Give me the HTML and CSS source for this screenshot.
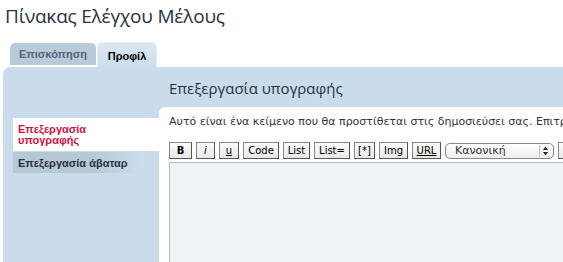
FILE: index.html
```html
<!DOCTYPE html>
<html lang="el">

<head>
  <meta charset="UTF-8" />
  <title>Πίνακας Ελέγχου Μέλους</title>
  <link rel="stylesheet" href="styles.css">
</head>

<body>
  <div class="page">
    <h2 class="title">Πίνακας Ελέγχου Μέλους</h2>

    <div class="tabs">
      <a class="tab">Επισκόπηση</a>
      <a class="tab active">Προφίλ</a>
    </div>

    <div class="panel">
      <div class="menu">
        <a class="menu-item active"><span>Επεξεργασία υπογραφής</span></a>
        <a class="menu-item">Επεξεργασία άβαταρ</a>
      </div>

      <div class="content">
        <h3 class="heading">Επεξεργασία υπογραφής</h3>
        <div class="box">
          <p class="intro">Αυτό είναι ένα κείμενο που θα προστίθεται στις δημοσιεύσει σας. Επιτρέπεται η χρήση BBCode.</p>

          <div class="toolbar">
            <button class="btn b">B</button>
            <button class="btn i">i</button>
            <button class="btn u">u</button>
            <button class="btn w-code">Code</button>
            <button class="btn w-list">List</button>
            <button class="btn w-code">List=</button>
            <button class="btn w-star">[*]</button>
            <button class="btn w-img">Img</button>
            <button class="btn w-img url">URL</button>
            <div class="select">
              <span>Κανονική</span>
              <svg class="arrows" width="10" height="12" viewBox="0 0 10 12">
                <line x1="0.5" y1="0" x2="0.5" y2="12" stroke="#bbb" />
                <path d="M4 5 L6.5 1.5 L9 5 Z" fill="#222" />
                <path d="M4 7 L6.5 10.5 L9 7 Z" fill="#222" />
              </svg>
            </div>
            <button class="btn colour">Χρώμα</button>
          </div>

          <div class="editor"></div>
        </div>
      </div>
    </div>
  </div>
</body>

</html>
```

FILE: styles.css
```css
body {
  margin: 0;
  background-color: white;
  font-family: "DejaVu Sans", Verdana, sans-serif;
  color: #28313f;
  overflow: hidden;
}

.page {
  padding: 3px 0 0 3px;
  width: 760px;
}

.title {
  margin: 0 0 0 2px;
  font-family: "Open Sans", sans-serif;
  font-weight: normal;
  font-size: 19px;
  letter-spacing: -0.2px;
  line-height: 26px;
  color: #28313f;
}

.tabs {
  display: flex;
  align-items: flex-end;
  gap: 1px;
  margin: 13px 0 0 7px;
}

.tab {
  display: block;
  font-family: "Liberation Sans", Arial, sans-serif;
  font-size: 11px;
  font-weight: bold;
  color: #536482;
  background-color: #b9cad9;
  border-radius: 5px 5px 0 0;
  width: 86px;
  text-align: center;
  height: 22px;
  line-height: 23px;
  margin-bottom: 2px;
}

.tab.active {
  color: #000;
  background: linear-gradient(#dde8f2, #cadceb);
  width: 60px;
  height: 25px;
  line-height: 26px;
  margin-bottom: 0;
  border: 1px solid #e6eef5;
  border-bottom: none;
  box-sizing: border-box;
}

.panel {
  display: flex;
  background-color: #cadceb;
  border-radius: 7px 0 0 0;
  height: 300px;
}

.menu {
  width: 146px;
  padding: 51px 0 0 10px;
  flex-shrink: 0;
}

.menu-item {
  display: block;
  font-family: "Liberation Sans", Arial, sans-serif;
  font-size: 11px;
  font-weight: bold;
  color: #28313f;
  padding: 0 0 0 5px;
  margin-bottom: 1px;
}

.menu-item span {
  display: block;
  width: 100px;
}

.menu-item.active {
  color: #d31141;
  background-color: white;
  padding-top: 6px;
  height: 27px;
  line-height: 11px;
}

.menu-item:not(.active) {
  width: 122px;
  height: 21px;
  line-height: 22px;
  background: linear-gradient(to right, #b6c7d6 60%, #cadceb);
}

.content {
  flex: 1;
}

.heading {
  margin: 0;
  padding: 10px 0 0 10px;
  height: 30px;
  font-family: "Open Sans", sans-serif;
  font-weight: normal;
  font-size: 15px;
  line-height: 22px;
  color: #28313f;
}

.box {
  background-color: white;
  border-radius: 6px 0 0 0;
  padding: 8px 0 0 10px;
  height: 260px;
}

.intro {
  margin: 0;
  font-size: 11px;
  line-height: 14px;
  white-space: nowrap;
  color: #333;
}

.toolbar {
  display: flex;
  gap: 4px;
  margin-top: 13px;
  align-items: center;
}

.btn {
  font-family: "DejaVu Sans", sans-serif;
  font-size: 10px;
  height: 17px;
  padding: 0;
  margin: 0;
  box-sizing: border-box;
  border: 1px solid #666;
  border-color: #888 #555 #555 #888;
  background: linear-gradient(#fafafa, #e9e9e9);
  color: #000;
  line-height: 14px;
  text-align: center;
  flex-shrink: 0;
}

.btn.b {
  font-weight: bold;
  width: 23px;
}

.btn.i {
  font-style: italic;
  width: 19px;
}

.btn.u {
  text-decoration: underline;
  width: 20px;
}

.w-code {
  width: 36px;
}

.w-list {
  width: 27px;
}

.w-star {
  width: 21px;
}

.w-img {
  width: 29px;
}

.btn.url {
  text-decoration: underline;
}

.btn.colour {
  width: 44px;
  color: #b66b00;
}

.select {
  display: flex;
  justify-content: space-between;
  align-items: center;
  flex-shrink: 0;
  width: 109px;
  height: 16px;
  border: 1px solid #888;
  border-radius: 5px;
  background: linear-gradient(#fff, #eee);
  font-size: 11px;
  padding: 0 4px 0 9px;
  box-sizing: border-box;
}

.arrows {
  display: block;
}

.editor {
  margin-top: 3px;
  height: 200px;
  border: 1px solid #b4bac0;
  background-color: #eff3f7;
}
```
